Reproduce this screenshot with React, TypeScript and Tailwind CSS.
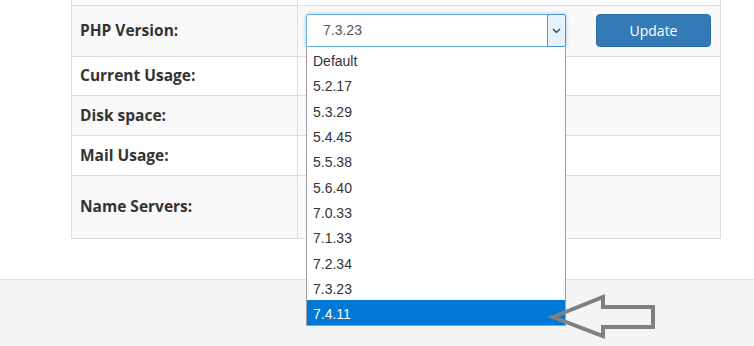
import React from 'react';

const versions = ['Default', '5.2.17', '5.3.29', '5.4.45', '5.5.38', '5.6.40', '7.0.33', '7.1.33', '7.2.34', '7.3.23', '7.4.11'];

const rows = [
  { label: '', h: 'h-[5px]', bg: 'bg-white' },
  { label: 'PHP Version:', h: 'h-[51px]', bg: 'bg-[#f9f9f9]', select: true },
  { label: 'Current Usage:', h: 'h-[39px]', bg: 'bg-white' },
  { label: 'Disk space:', h: 'h-[40px]', bg: 'bg-[#f9f9f9]' },
  { label: 'Mail Usage:', h: 'h-[40px]', bg: 'bg-white' },
  { label: 'Name Servers:', h: 'h-[63px]', bg: 'bg-[#f9f9f9]' },
];

function VersionSelect() {
  return (
    <div className="relative w-[260px]">
      <div className="flex h-[33px] items-center justify-between rounded-t-[3px] border border-[#66afe9] bg-white pl-4 shadow-[0_0_4px_rgba(102,175,233,0.6)]">
        <span className="text-[14px] text-[#555]">7.3.23</span>
        <div className="-my-px -mr-px flex h-[33px] w-[19px] items-center justify-center rounded-[2px] border border-[#4d94d6] bg-[#e5f1fb]">
          <svg width="9" height="6" viewBox="0 0 9 6" fill="none">
            <path d="M1 1l3.5 3.5L8 1" stroke="#333" strokeWidth="1.2" />
          </svg>
        </div>
      </div>
      {/* open list */}
      <ul className="absolute left-0 top-[33px] z-10 w-[260px] border border-t-0 border-[#a0a0a0] bg-white">
        {versions.map((v, i) => (
          <li
            key={v}
            className={
              i === versions.length - 1
                ? 'flex h-[25.3px] items-center bg-[#0078d7] pl-[6px] pt-[4px] text-[14px] text-white'
                : 'flex h-[25.3px] items-center pl-[6px] pt-[4px] text-[14px] text-[#333]'
            }
          >
            {v}
          </li>
        ))}
      </ul>
    </div>
  );
}

export default function App() {
  return (
    <div className="relative h-[346px] w-[754px] overflow-hidden bg-white font-['Liberation_Sans',Arial,sans-serif]">
      <div className="h-[279px] pl-[71px]">
        <div className="w-[650px] border-x border-b border-[#ddd]">
          {rows.map((r, i) => (
            <div
              key={i}
              className={`grid grid-cols-[226px_1fr] ${r.h} ${r.bg} ${i > 0 ? 'border-t border-[#ddd]' : ''}`}
            >
              <div className="flex items-center border-r border-[#ddd] pl-[8px] font-['Open_Sans',sans-serif] text-[15.5px] font-bold text-[#333]">
                {r.label}
              </div>
              <div className="flex items-start pl-[8px] pt-[8px]">
                {r.select && (
                  <>
                    <VersionSelect />
                    <button className="ml-[30px] h-[33px] w-[115px] rounded-[4px] border border-[#2e6da4] bg-[#337ab7] font-['Open_Sans',sans-serif] text-[14px] text-white">
                      Update
                    </button>
                  </>
                )}
              </div>
            </div>
          ))}
        </div>
      </div>
      <div className="h-[67px] border-t border-[#e3e3e3] bg-[#f4f4f4]" />

      {/* pointer arrow drawn over the list */}
      <svg className="absolute left-[548px] top-[292px] z-20" width="112" height="50" viewBox="548 292 112 50" fill="none">
        <path
          d="M553 317 L603 297 L603 307 L653 307 L653 327 L603 327 L603 336 Z"
          stroke="#808080"
          strokeWidth="4"
          strokeLinejoin="miter"
        />
      </svg>
    </div>
  );
}
